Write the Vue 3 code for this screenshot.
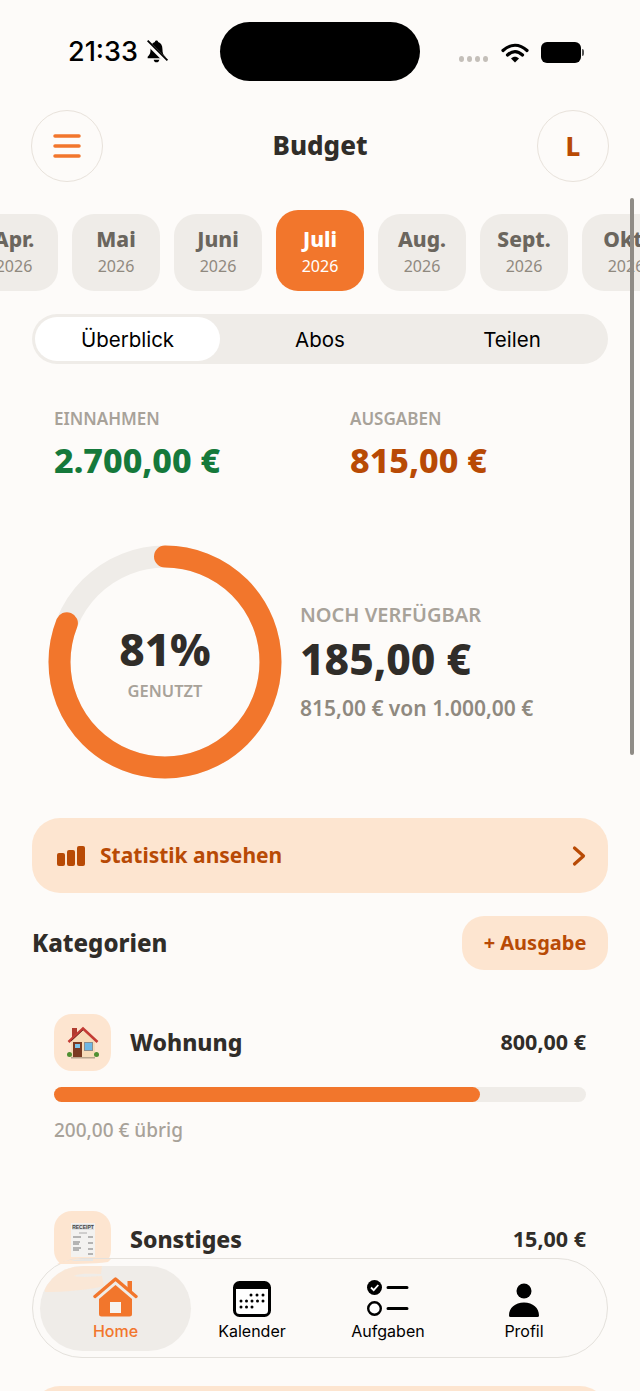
<template>
  <div class="page">
    <div class="status-bar">
      <div class="status-left">
        <span class="time">21:33</span>
        <svg class="bell" viewBox="0 0 24 24" width="25" height="25">
          <path d="M12 1.500c-.9 0-1.500.6-1.600 1.400C7.700 3.700 6.300 6 6.300 9.500c0 3.900-.8 5.500-2.800 7.500v1.500h17V17c-2-2-2.800-3.600-2.800-7.500 0-3.500-1.400-5.800-4.100-6.600-.1-.8-.7-1.400-1.600-1.400zM9.300 19.800c.2 1.500 1.300 2.500 2.700 2.500s2.500-1 2.700-2.500z" fill="#000" />
          <path d="M2.500 2.500l19 19" stroke="#fdfbf9" stroke-width="4.500" />
          <path d="M3.500 1.500l19 19" stroke="#000" stroke-width="1.800" />
        </svg>
      </div>
      <div class="island"></div>
      <div class="status-right">
        <span class="dots"><i></i><i></i><i></i><i></i></span>
        <svg viewBox="0 0 28 22" width="28" height="22" class="wifi">
          <path d="M2 8.500C9.500 1.500 18.500 1.500 26 8.500M6.500 13c5-4.500 10-4.500 15 0" fill="none" stroke="#000" stroke-width="3.200" stroke-linecap="round" />
          <path d="M10 16.500c2.500-2.200 5.500-2.200 8 0L14 20.500z" fill="#000" />
        </svg>
        <span class="battery"></span>
      </div>
    </div>

    <header class="top-bar">
      <button class="round-btn">
        <svg viewBox="0 0 28 26" width="28" height="26">
          <path d="M2 3h24M2 13h24M2 23h24" stroke="#f2762c" stroke-width="3.500" stroke-linecap="round" />
        </svg>
      </button>
      <h1 class="title">Budget</h1>
      <button class="round-btn avatar">L</button>
    </header>

    <div class="months">
      <div v-for="m in months" :key="m.name" class="month" :class="{ active: m.active }">
        <span class="month-name">{{ m.name }}</span>
        <span class="month-year">2026</span>
      </div>
    </div>

    <div class="segments">
      <div v-for="(s, i) in segments" :key="s" class="segment" :class="{ selected: i === 0 }">{{ s }}</div>
    </div>

    <div class="totals">
      <div class="total">
        <div class="label">EINNAHMEN</div>
        <div class="amount income">2.700,00 €</div>
      </div>
      <div class="total">
        <div class="label">AUSGABEN</div>
        <div class="amount expense">815,00 €</div>
      </div>
    </div>

    <section class="overview">
      <div class="ring">
        <svg viewBox="0 0 234 234" width="234" height="234">
          <circle cx="117" cy="117" r="105.500" fill="none" stroke="#efecE8" stroke-width="22" />
          <circle
            cx="117"
            cy="117"
            r="105.500"
            fill="none"
            stroke="#f2762c"
            stroke-width="22"
            stroke-linecap="round"
            pathLength="100"
            stroke-dasharray="81 100"
            transform="rotate(-90 117 117)"
          />
        </svg>
        <div class="ring-text">
          <span class="percent">81%</span>
          <span class="used">GENUTZT</span>
        </div>
      </div>
      <div class="remaining">
        <div class="remaining-label">NOCH VERFÜGBAR</div>
        <div class="remaining-value">185,00 €</div>
        <div class="remaining-sub">815,00 € von 1.000,00 €</div>
      </div>
    </section>

    <button class="stats-card">
      <svg viewBox="0 0 28 20" width="28" height="20">
        <rect x="0" y="7" width="8" height="13" rx="2" fill="#b84a05" />
        <rect x="10" y="4" width="8" height="16" rx="2" fill="#b84a05" />
        <rect x="20" y="0" width="8" height="20" rx="2" fill="#b84a05" />
      </svg>
      <span class="stats-text">Statistik ansehen</span>
      <svg class="chevron" viewBox="0 0 14 22" width="14" height="22">
        <path d="M2.500 3l9 8-9 8" fill="none" stroke="#b84a05" stroke-width="3.200" stroke-linecap="round" stroke-linejoin="round" />
      </svg>
    </button>

    <div class="section-head">
      <h2 class="section-title">Kategorien</h2>
      <button class="add-btn">+ Ausgabe</button>
    </div>

    <div class="category">
      <div class="cat-head">
        <div class="cat-icon">
          <svg viewBox="0 0 32 33" width="32" height="33">
            <rect x="5" y="2" width="5" height="9" fill="#b03c30" />
            <path d="M16 3L4 14v17h24V14z" fill="#f7dcb9" />
            <path d="M1.500 16L16 2.500 30.500 16" fill="none" stroke="#c43c34" stroke-width="2.600" />
            <path d="M4 15L16 4" stroke="#5e2a22" stroke-width=".8" />
            <rect x="6" y="16" width="9" height="16" fill="#7a3b22" />
            <rect x="8" y="18" width="5" height="4" fill="#7cc4e8" />
            <rect x="17" y="16" width="9" height="9" fill="#8a8f90" />
            <rect x="18" y="17" width="7" height="7" fill="#6db8e6" />
            <circle cx="2.500" cy="28.500" r="2.500" fill="#4f8f32" />
            <circle cx="29.500" cy="28.500" r="2.500" fill="#4f8f32" />
            <rect x="4" y="31" width="24" height="1.500" fill="#b8a68e" />
          </svg>
        </div>
        <span class="cat-name">Wohnung</span>
        <span class="cat-amount">800,00 €</span>
      </div>
      <div class="bar"><div class="bar-fill" :style="{ width: '80%' }"></div></div>
      <div class="cat-left">200,00 € übrig</div>
    </div>

    <div class="category second">
      <div class="cat-head">
        <div class="cat-icon">
          <svg viewBox="0 0 26 36" width="26" height="36">
            <rect x="1" y="1" width="24" height="34" fill="#f3f2f0" />
            <rect x="2" y="2" width="22" height="6" fill="#dfe0e1" />
            <text x="13" y="7" text-anchor="middle" class="receipt-word">RECEIPT</text>
            <path d="M9 11h8" stroke="#999" stroke-width=".8" />
            <path d="M3 15h8M18 15h5M3 20h7M3 22h6M18 21h5M3 26h8M18 27h5M3 28h6M18 32h5" stroke="#777" stroke-width="1" />
          </svg>
        </div>
        <span class="cat-name">Sonstiges</span>
        <span class="cat-amount">15,00 €</span>
      </div>
    </div>

    <div class="next-card"></div>

    <nav class="tab-bar">
      <svg class="sliver" viewBox="0 0 80 6" width="80" height="6">
        <path d="M24 5C32 1 42 0 50 0h28l-3 3C60 5 40 5 24 5z" fill="#fde5d0" />
        <path d="M38 2C44 0 54 0 60 0v2z" fill="#e6e6e4" />
      </svg>
      <div class="tab active">
        <svg class="bleed" viewBox="0 0 70 28" width="70" height="28">
          <path d="M5 26C3 18 6 10 14 6 20 2 40-1 62 0l-1 8C50 8 40 7 34 10c10 2 24 0 28 0l2 10C48 24 24 26 5 26z" fill="#fde5d0" opacity=".75" />
        </svg>
        <svg viewBox="0 0 45 40" width="45" height="40">
          <path d="M2 19.500L22.500 2 43 19.500" fill="none" stroke="#f2762c" stroke-width="3.400" stroke-linecap="round" stroke-linejoin="round" />
          <path d="M34.500 4h4.500v12l-4.500-4z" fill="#f2762c" />
          <path d="M22.500 8L6 22v15a2.500 2.500 0 0 0 2.500 2.500h28A2.500 2.500 0 0 0 39 37V22z" fill="#f2762c" />
          <rect x="17" y="25" width="11" height="11" fill="#f6f4f1" />
        </svg>
        <span class="tab-label">Home</span>
      </div>
      <div class="tab">
        <svg viewBox="0 0 38 36" width="38" height="36">
          <rect x="1.500" y="1.500" width="35" height="33" rx="5" fill="#fff" stroke="#000" stroke-width="3" />
          <path d="M2 8V6a4 4 0 0 1 4-4h26a4 4 0 0 1 4 4v2z" fill="#000" />
          <g fill="#000">
            <circle cx="18" cy="14" r="1.500" /><circle cx="24" cy="14" r="1.500" /><circle cx="30" cy="14" r="1.500" />
            <circle cx="8" cy="20" r="1.500" /><circle cx="13.500" cy="20" r="1.500" /><circle cx="19" cy="20" r="1.500" /><circle cx="24.500" cy="20" r="1.500" /><circle cx="30" cy="20" r="1.500" />
            <circle cx="8" cy="26" r="1.500" /><circle cx="13.500" cy="26" r="1.500" /><circle cx="19" cy="26" r="1.500" />
          </g>
        </svg>
        <span class="tab-label">Kalender</span>
      </div>
      <div class="tab">
        <svg viewBox="0 0 44 38" width="44" height="38">
          <circle cx="8.500" cy="8.500" r="7.500" fill="#000" />
          <path d="M5 8.500l2.700 2.700L12.300 6" fill="none" stroke="#fff" stroke-width="1.800" />
          <circle cx="8.500" cy="29.500" r="6.300" fill="#fff" stroke="#000" stroke-width="2.400" />
          <path d="M22 8.500h19M22 29.500h19" stroke="#000" stroke-width="3" stroke-linecap="round" />
        </svg>
        <span class="tab-label">Aufgaben</span>
      </div>
      <div class="tab">
        <svg viewBox="0 0 32 34" width="32" height="34">
          <circle cx="16" cy="8" r="7.500" fill="#000" />
          <path d="M1 32.500C1 25 7 19.500 16 19.500S31 25 31 32.500a1.500 1.500 0 0 1-1.500 1.500h-27A1.500 1.500 0 0 1 1 32.500z" fill="#000" />
        </svg>
        <span class="tab-label">Profil</span>
      </div>
    </nav>

    <div class="scroll-thumb"></div>
  </div>
</template>

<script setup>
const months = [
  { name: "Apr." },
  { name: "Mai" },
  { name: "Juni" },
  { name: "Juli", active: true },
  { name: "Aug." },
  { name: "Sept." },
  { name: "Okt." },
];

const segments = ["Überblick", "Abos", "Teilen"];
</script>

<style>
html,
body {
  margin: 0;
  background: #fdfbf9;
}
</style>

<style scoped>
.page {
  position: relative;
  width: 640px;
  height: 1391px;
  overflow: hidden;
  background: #fdfbf9;
  color: #302d29;
  font-family: "Noto Sans", sans-serif;
}

button {
  font-family: inherit;
  border: none;
  cursor: pointer;
}

.status-bar {
  display: grid;
  grid-template-columns: 220px 200px 220px;
  height: 59px;
  padding-top: 22px;
}

.status-left {
  display: flex;
  align-items: center;
  gap: 6px;
  padding: 0 0 0 68px;
}

.time {
  font-family: Inter, sans-serif;
  font-size: 27px;
  font-weight: 500;
  color: #000;
}

.island {
  height: 59px;
  background: #000;
  border-radius: 30px;
}

.status-right {
  display: flex;
  align-items: center;
  padding: 2px 0 0 39px;
}

.dots {
  display: flex;
  gap: 3px;
  margin: 12px 13px 0 0;
}

.dots i {
  width: 5px;
  height: 6px;
  border-radius: 50%;
  background: #c4bfb9;
}

.wifi {
  margin-right: 12px;
}

.battery {
  position: relative;
  width: 40px;
  height: 21px;
  border-radius: 6px;
  background: #000;
}

.battery::after {
  content: "";
  position: absolute;
  top: 7px;
  right: -3px;
  width: 2px;
  height: 7px;
  border-radius: 0 2px 2px 0;
  background: #555;
}

.top-bar {
  display: flex;
  align-items: center;
  justify-content: space-between;
  margin-top: 29px;
  padding: 0 31px;
}

.round-btn {
  display: flex;
  align-items: center;
  justify-content: center;
  width: 72px;
  height: 72px;
  box-sizing: border-box;
  padding: 0;
  border: 1px solid #e8e2db;
  border-radius: 50%;
  background: #fdfbf9;
}

.avatar {
  font-size: 26px;
  font-weight: 800;
  color: #b84a05;
}

.title {
  margin: 0;
  font-size: 26px;
  font-weight: 800;
  line-height: 1.2;
}

.months {
  display: flex;
  align-items: flex-end;
  gap: 14px;
  width: 700px;
  height: 81px;
  margin: 28px 0 0 -30px;
}

.month {
  display: flex;
  flex: none;
  flex-direction: column;
  align-items: center;
  justify-content: center;
  gap: 4px;
  width: 88px;
  height: 77px;
  padding-bottom: 3px;
  box-sizing: border-box;
  border-radius: 22px;
  background: #efecE8;
  color: #6b665e;
}

.month.active {
  height: 81px;
  padding-bottom: 0;
  padding-top: 1px;
  background: #f2762c;
  color: #fff;
}

.month-name {
  font-size: 21px;
  font-weight: 800;
  line-height: 26px;
}

.month-year {
  font-size: 16px;
  line-height: 20px;
  color: #8f897f;
}

.month.active .month-year {
  color: #fff;
}

.segments {
  display: grid;
  grid-template-columns: repeat(3, 1fr);
  height: 50px;
  margin: 23px 32px 0;
  border-radius: 25px;
  background: #efecE8;
}

.segment {
  display: flex;
  align-items: center;
  justify-content: center;
  margin: 3px;
  border-radius: 22px;
  font-family: Inter, sans-serif;
  font-size: 20.500px;
  color: #000;
}

.segment.selected {
  margin-right: 4px;
  background: #fff;
}

.totals {
  display: flex;
  margin-top: 43px;
  padding-left: 54px;
}

.total {
  flex: none;
  width: 296px;
}

.label {
  font-size: 17px;
  font-weight: 600;
  line-height: 24px;
  color: #a8a299;
}

.amount {
  margin-top: 6px;
  font-size: 34px;
  font-weight: 800;
  line-height: 46px;
}

.income {
  color: #15793b;
}

.expense {
  color: #b84a05;
}

.overview {
  display: flex;
  align-items: center;
  gap: 18px;
  margin-top: 62px;
  padding-left: 48px;
}

.ring {
  position: relative;
  width: 234px;
  height: 234px;
}

.ring-text {
  position: absolute;
  inset: 0;
  display: flex;
  flex-direction: column;
  align-items: center;
  justify-content: center;
}

.percent {
  margin-top: -2px;
  font-size: 44px;
  font-weight: 800;
  line-height: 56px;
}

.used {
  margin-top: 4px;
  font-size: 16.500px;
  font-weight: 600;
  line-height: 20px;
  color: #a8a299;
}

.remaining-label {
  font-size: 20px;
  font-weight: 600;
  line-height: 24px;
  color: #a8a299;
}

.remaining-value {
  margin-top: 2px;
  font-size: 42.500px;
  font-weight: 800;
  line-height: 60px;
}

.remaining-sub {
  margin-top: 5px;
  font-size: 21px;
  font-weight: 600;
  line-height: 28px;
  color: #8f897f;
}

.stats-card {
  display: flex;
  align-items: center;
  width: 576px;
  height: 75px;
  margin: 39px 32px 0;
  padding: 0 22px 0 25px;
  border-radius: 28px;
  background: #fde5d0;
}

.stats-text {
  margin: -2px 0 0 15px;
  font-size: 21px;
  font-weight: 700;
  color: #b84a05;
}

.chevron {
  margin-left: auto;
}

.section-head {
  display: flex;
  align-items: center;
  justify-content: space-between;
  margin: 23px 32px 0;
}

.section-title {
  margin: -2px 0 0;
  font-size: 24px;
  font-weight: 800;
}

.add-btn {
  width: 146px;
  height: 54px;
  padding: 0 0 2px;
  border-radius: 22px;
  background: #fde5d0;
  font-size: 20px;
  font-weight: 700;
  color: #b84a05;
}

.category {
  margin-top: 44px;
  padding: 0 54px;
}

.category.second {
  margin-top: 67px;
}

.cat-head {
  display: flex;
  align-items: center;
}

.cat-icon {
  display: flex;
  align-items: center;
  justify-content: center;
  width: 57px;
  height: 57px;
  border-radius: 18px;
  background: #fde5d0;
}

.receipt-word {
  font-family: "Liberation Sans", sans-serif;
  font-size: 5px;
  font-weight: 700;
  fill: #444;
}

.cat-name {
  margin: -2px 0 0 19px;
  font-size: 23px;
  font-weight: 800;
}

.cat-amount {
  margin: -2px 0 0 auto;
  font-size: 21.500px;
  font-weight: 700;
}

.bar {
  height: 15px;
  margin-top: 16px;
  border-radius: 8px;
  background: #efecE8;
}

.bar-fill {
  height: 100%;
  border-radius: 8px;
  background: #f2762c;
}

.cat-left {
  margin-top: 14px;
  font-size: 19px;
  font-weight: 500;
  line-height: 28px;
  color: #a8a299;
}

.next-card {
  position: absolute;
  top: 1386px;
  left: 32px;
  width: 576px;
  height: 80px;
  border-radius: 28px;
  background: #fde5d0;
}

.tab-bar {
  position: absolute;
  top: 1258px;
  left: 32px;
  display: grid;
  grid-template-columns: 144px 136px 136px 136px;
  width: 576px;
  height: 100px;
  box-sizing: border-box;
  padding: 7px 7px 6px;
  border: 1px solid #e4e1dc;
  border-radius: 50px;
  background: #fcfaf8;
}

.sliver {
  position: absolute;
  top: 0;
  left: 0;
}

.tab {
  position: relative;
  display: flex;
  flex-direction: column;
  align-items: center;
  justify-content: flex-end;
  padding-bottom: 9px;
  border-radius: 43px;
  color: #000;
}

.tab.active {
  width: 151px;
  overflow: hidden;
  background: #efecE8;
}

.tab svg {
  position: relative;
}

.tab svg.bleed {
  position: absolute;
  top: 0;
  left: 0;
}

.tab-label {
  position: relative;
  margin-top: 3px;
  font-family: Inter, sans-serif;
  font-size: 16px;
  line-height: 22px;
}

.tab.active .tab-label {
  font-weight: 500;
  color: #f2762c;
}

.scroll-thumb {
  position: absolute;
  top: 198px;
  left: 630px;
  width: 4px;
  height: 557px;
  border-radius: 2px;
  background: #8f8b85;
}
</style>
